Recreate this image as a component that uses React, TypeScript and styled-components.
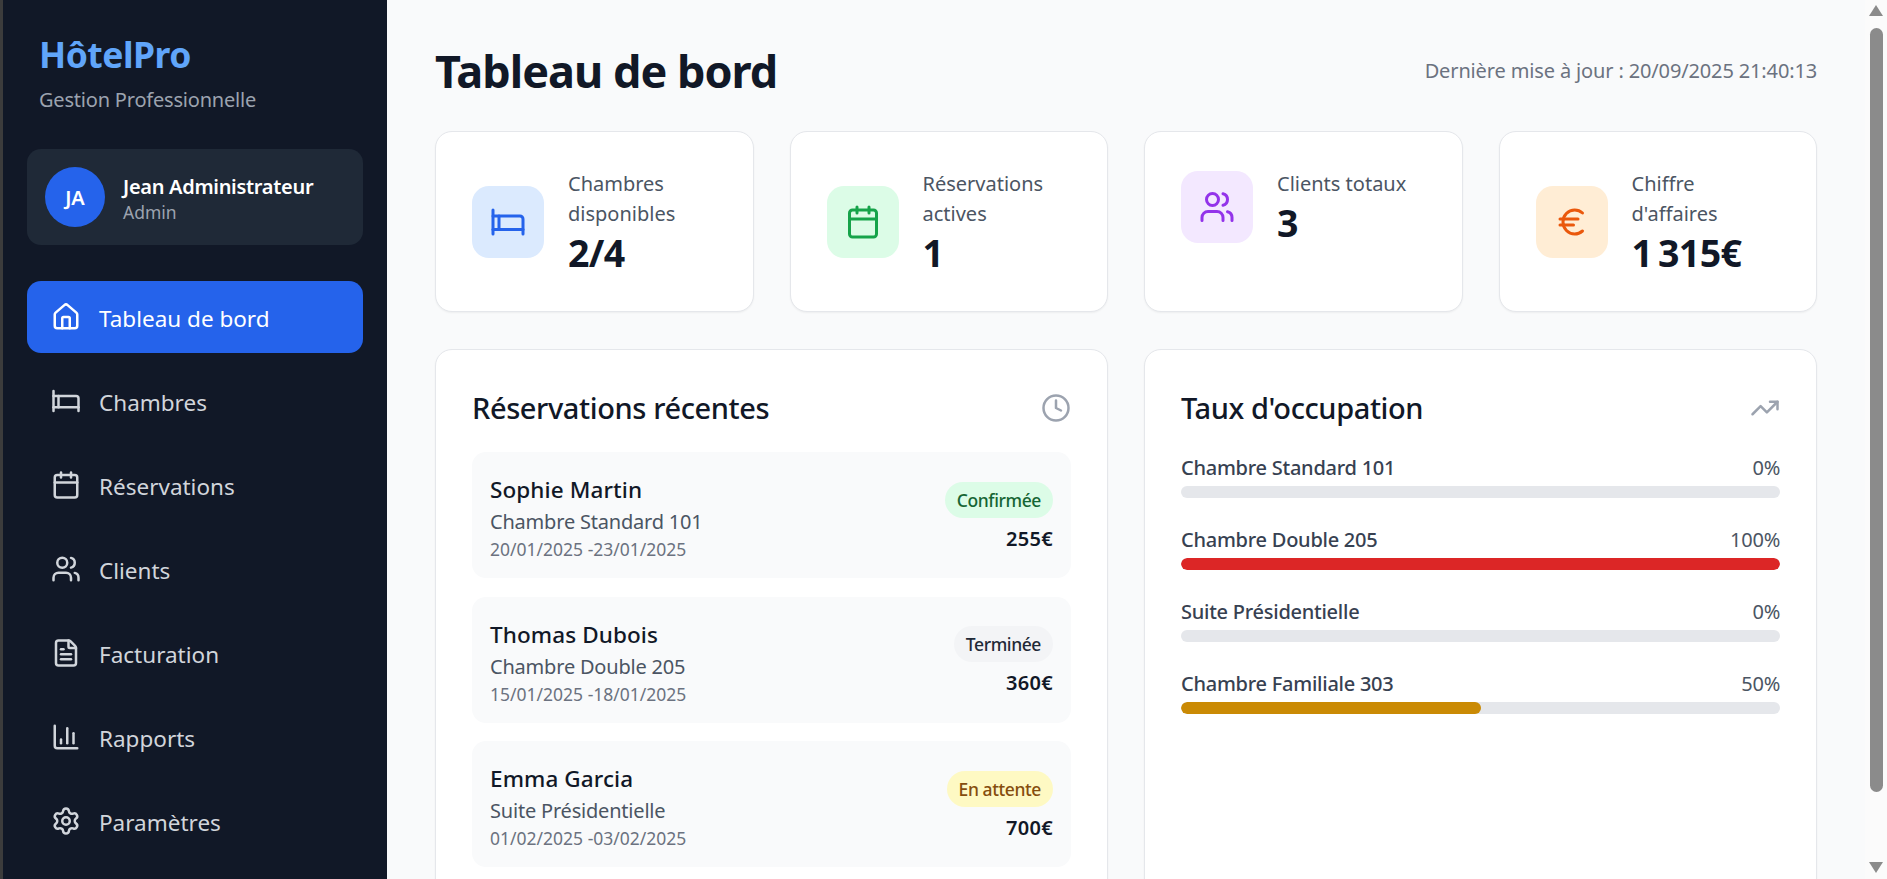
import styled, { createGlobalStyle } from 'styled-components';
import { Bed, Calendar, ChartColumn, Clock, Euro, FileText, House, Settings, TrendingUp, Users } from 'lucide-react';
import type { LucideIcon } from 'lucide-react';

interface NavEntry {
    label: string;
    icon: LucideIcon;
    active?: boolean;
}

interface StatEntry {
    label: string;
    value: string;
    icon: LucideIcon;
    tint: string;
    color: string;
}

type BookingStatus = 'confirmed' | 'done' | 'pending';

interface BookingEntry {
    guest: string;
    room: string;
    dates: string;
    status: BookingStatus;
    statusLabel: string;
    price: string;
}

interface OccupancyEntry {
    room: string;
    rate: number;
    color: string;
}

const navEntries: NavEntry[] = [
    { label: 'Tableau de bord', icon: House, active: true },
    { label: 'Chambres', icon: Bed },
    { label: 'Réservations', icon: Calendar },
    { label: 'Clients', icon: Users },
    { label: 'Facturation', icon: FileText },
    { label: 'Rapports', icon: ChartColumn },
    { label: 'Paramètres', icon: Settings },
];

const statEntries: StatEntry[] = [
    { label: 'Chambres disponibles', value: '2/4', icon: Bed, tint: '#dbeafe', color: '#2563eb' },
    { label: 'Réservations actives', value: '1', icon: Calendar, tint: '#dcfce7', color: '#16a34a' },
    { label: 'Clients totaux', value: '3', icon: Users, tint: '#f3e8ff', color: '#9333ea' },
    { label: "Chiffre d'affaires", value: '1\u2009315€', icon: Euro, tint: '#ffedd5', color: '#ea580c' },
];

const bookingEntries: BookingEntry[] = [
    { guest: 'Sophie Martin', room: 'Chambre Standard 101', dates: '20/01/2025 -23/01/2025', status: 'confirmed', statusLabel: 'Confirmée', price: '255€' },
    { guest: 'Thomas Dubois', room: 'Chambre Double 205', dates: '15/01/2025 -18/01/2025', status: 'done', statusLabel: 'Terminée', price: '360€' },
    { guest: 'Emma Garcia', room: 'Suite Présidentielle', dates: '01/02/2025 -03/02/2025', status: 'pending', statusLabel: 'En attente', price: '700€' },
];

const occupancyEntries: OccupancyEntry[] = [
    { room: 'Chambre Standard 101', rate: 0, color: '#16a34a' },
    { room: 'Chambre Double 205', rate: 100, color: '#dc2626' },
    { room: 'Suite Présidentielle', rate: 0, color: '#16a34a' },
    { room: 'Chambre Familiale 303', rate: 50, color: '#ca8a04' },
];

const badgeColors: Record<BookingStatus, { bg: string; fg: string }> = {
    confirmed: { bg: '#dcfce7', fg: '#166534' },
    done: { bg: '#f3f4f6', fg: '#1f2937' },
    pending: { bg: '#fef9c3', fg: '#854d0e' },
};

const App = () => {
    return (<>
        <GlobalStyle />
        <Page>
            <WindowEdge />
            <Sidebar>
                <Brand>HôtelPro</Brand>
                <BrandTagline>Gestion Professionnelle</BrandTagline>
                <UserCard>
                    <Avatar>JA</Avatar>
                    <UserText>
                        <UserName>Jean Administrateur</UserName>
                        <UserRole>Admin</UserRole>
                    </UserText>
                </UserCard>
                <Nav>
                    {navEntries.map(({ label, icon: Icon, active }) => (
                        <NavItem key={label} $active={active}>
                            <Icon size={30} />
                            <NavLabel>{label}</NavLabel>
                        </NavItem>
                    ))}
                </Nav>
            </Sidebar>
            <Main>
                <Header>
                    <Title>Tableau de bord</Title>
                    <Updated>Dernière mise à jour : 20/09/2025 21:40:13</Updated>
                </Header>
                <StatsGrid>
                    {statEntries.map(({ label, value, icon: Icon, tint, color }) => (
                        <StatCard key={label}>
                            <StatRow>
                                <StatIcon $tint={tint} $color={color}>
                                    <Icon size={36} />
                                </StatIcon>
                                <div>
                                    <StatLabel>{label}</StatLabel>
                                    <StatValue>{value}</StatValue>
                                </div>
                            </StatRow>
                        </StatCard>
                    ))}
                </StatsGrid>
                <PanelsGrid>
                    <Panel>
                        <PanelHeader>
                            <PanelTitle>Réservations récentes</PanelTitle>
                            <Clock size={30} />
                        </PanelHeader>
                        <BookingList>
                            {bookingEntries.map((booking) => (
                                <BookingRow key={booking.guest}>
                                    <BookingText>
                                        <GuestName>{booking.guest}</GuestName>
                                        <RoomName>{booking.room}</RoomName>
                                        <BookingDates>{booking.dates}</BookingDates>
                                    </BookingText>
                                    <BookingSide>
                                        <StatusBadge $status={booking.status}>{booking.statusLabel}</StatusBadge>
                                        <Price>{booking.price}</Price>
                                    </BookingSide>
                                </BookingRow>
                            ))}
                        </BookingList>
                    </Panel>
                    <Panel>
                        <PanelHeader>
                            <PanelTitle>Taux d'occupation</PanelTitle>
                            <TrendingUp size={30} />
                        </PanelHeader>
                        <OccupancyList>
                            {occupancyEntries.map(({ room, rate, color }) => (
                                <div key={room}>
                                    <OccupancyHead>
                                        <OccupancyRoom>{room}</OccupancyRoom>
                                        <OccupancyRate>{rate}%</OccupancyRate>
                                    </OccupancyHead>
                                    <BarTrack>
                                        <BarFill $color={color} style={{ width: `${rate}%` }} />
                                    </BarTrack>
                                </div>
                            ))}
                        </OccupancyList>
                    </Panel>
                </PanelsGrid>
            </Main>
            <ScrollTrack>
                <ArrowUp />
                <ScrollThumb />
                <ArrowDown />
            </ScrollTrack>
        </Page>
    </>);
};

const GlobalStyle = createGlobalStyle`
  html, body {
    margin: 0;
    height: 100%;
    overflow: hidden;
  }
  body {
    font-family: "Noto Sans", "Open Sans", Arial, sans-serif;
    color: #111827;
  }
  * {
    box-sizing: border-box;
  }
`;

const Page = styled.div`
  display: flex;
  height: 100vh;
  overflow: hidden;
  background: #f9fafb;
`;

const WindowEdge = styled.div`
  width: 3px;
  flex-shrink: 0;
  background: #3c3c3c;
`;

const Sidebar = styled.aside`
  width: 384px;
  flex-shrink: 0;
  padding: 33px 24px 0;
  background: #111827;
`;

const Brand = styled.div`
  margin-left: 12px;
  font-size: 35.5px;
  line-height: 42px;
  font-weight: 700;
  letter-spacing: -0.5px;
  color: #60a5fa;
`;

const BrandTagline = styled.div`
  margin: 10px 0 34px 12px;
  font-size: 20px;
  line-height: 30px;
  letter-spacing: -0.2px;
  color: #9ca3af;
`;

const UserCard = styled.div`
  display: flex;
  align-items: center;
  gap: 18px;
  height: 96px;
  padding: 0 18px;
  margin-bottom: 36px;
  border-radius: 14px;
  background: #1f2937;
`;

const Avatar = styled.div`
  display: flex;
  align-items: center;
  justify-content: center;
  width: 60px;
  height: 60px;
  border-radius: 50%;
  background: #2563eb;
  color: #fff;
  font-size: 20px;
  font-weight: 600;
`;

const UserText = styled.div`
  padding-top: 2px;
`;

const UserName = styled.div`
  font-size: 20px;
  line-height: 28px;
  font-weight: 600;
  letter-spacing: -0.3px;
  color: #fff;
`;

const UserRole = styled.div`
  font-size: 17.5px;
  line-height: 22px;
  color: #9ca3af;
`;

const Nav = styled.nav`
  display: flex;
  flex-direction: column;
  gap: 12px;
`;

const NavItem = styled.div<{ $active?: boolean }>`
  display: flex;
  align-items: center;
  gap: 18px;
  height: 72px;
  padding: 0 24px;
  border-radius: 14px;
  background: ${({ $active }) => ($active ? '#2563eb' : 'transparent')};
  color: ${({ $active }) => ($active ? '#fff' : '#d1d5db')};
`;

const NavLabel = styled.span`
  padding-top: 3px;
  font-size: 22.5px;
`;

const Main = styled.main`
  flex: 1;
  min-width: 0;
  padding: 36px 48px 0;
  overflow: hidden;
`;

const Header = styled.header`
  display: flex;
  align-items: center;
  justify-content: space-between;
  height: 72px;
  margin-bottom: 23px;
`;

const Title = styled.h1`
  margin: 0;
  padding-bottom: 2px;
  font-size: 45px;
  line-height: 52px;
  font-weight: 700;
  letter-spacing: -1px;
  color: #111827;
`;

const Updated = styled.div`
  padding-bottom: 4px;
  font-size: 20px;
  letter-spacing: -0.14px;
  color: #6b7280;
`;

const StatsGrid = styled.section`
  display: grid;
  grid-template-columns: repeat(4, 1fr);
  gap: 36px;
  margin-bottom: 37px;
`;

const StatCard = styled.div`
  height: 181px;
  padding: 37px 36px 0;
  border: 1px solid #e5e7eb;
  border-radius: 17px;
  background: #fff;
  box-shadow: 0 1px 2px rgba(0, 0, 0, 0.05);
`;

const StatRow = styled.div`
  display: flex;
  align-items: center;
  gap: 24px;
`;

const StatIcon = styled.div<{ $tint: string; $color: string }>`
  display: flex;
  align-items: center;
  justify-content: center;
  flex-shrink: 0;
  width: 72px;
  height: 72px;
  border-radius: 17px;
  background: ${({ $tint }) => $tint};
  color: ${({ $color }) => $color};
`;

const StatLabel = styled.div`
  font-size: 20px;
  line-height: 30px;
  color: #4b5563;
`;

const StatValue = styled.div`
  margin-top: 2px;
  font-size: 37.5px;
  line-height: 44px;
  font-weight: 700;
  letter-spacing: -0.6px;
  color: #111827;
`;

const PanelsGrid = styled.section`
  display: grid;
  grid-template-columns: repeat(2, 1fr);
  gap: 36px;
`;

const Panel = styled.div`
  min-height: 640px;
  padding: 36px;
  border: 1px solid #e5e7eb;
  border-radius: 17px;
  background: #fff;
  box-shadow: 0 1px 2px rgba(0, 0, 0, 0.05);
`;

const PanelHeader = styled.div`
  display: flex;
  align-items: center;
  justify-content: space-between;
  height: 44px;
  margin-bottom: 22px;
  color: #9ca3af;
`;

const PanelTitle = styled.h2`
  margin: 0;
  font-size: 29px;
  line-height: 44px;
  font-weight: 500;
  letter-spacing: -0.4px;
  color: #111827;
`;

const BookingList = styled.div`
  display: flex;
  flex-direction: column;
  gap: 18.5px;
`;

const BookingRow = styled.div`
  display: flex;
  align-items: center;
  justify-content: space-between;
  height: 126px;
  padding: 0 18px;
  border-radius: 14px;
  background: #f9fafb;
`;

const BookingText = styled.div`
  padding-top: 3px;
`;

const GuestName = styled.div`
  font-size: 22.5px;
  line-height: 35px;
  font-weight: 500;
  letter-spacing: 0.1px;
  color: #111827;
`;

const RoomName = styled.div`
  font-size: 20px;
  line-height: 30px;
  letter-spacing: -0.2px;
  color: #4b5563;
`;

const BookingDates = styled.div`
  font-size: 17.5px;
  line-height: 24px;
  color: #6b7280;
`;

const BookingSide = styled.div`
  display: flex;
  flex-direction: column;
  align-items: flex-end;
  gap: 7px;
  padding-top: 4px;
`;

const StatusBadge = styled.span<{ $status: BookingStatus }>`
  display: flex;
  align-items: center;
  height: 36px;
  padding: 0 12px;
  border-radius: 18px;
  font-size: 17.5px;
  font-weight: 500;
  letter-spacing: -0.4px;
  background: ${({ $status }) => badgeColors[$status].bg};
  color: ${({ $status }) => badgeColors[$status].fg};
`;

const Price = styled.div`
  font-size: 20px;
  line-height: 28px;
  font-weight: 600;
  letter-spacing: 0.3px;
  color: #111827;
`;

const OccupancyList = styled.div`
  display: flex;
  flex-direction: column;
  gap: 26px;
  margin-top: 2px;
`;

const OccupancyHead = styled.div`
  display: flex;
  justify-content: space-between;
  height: 30px;
  margin-bottom: 4px;
  font-size: 20px;
  line-height: 32px;
  letter-spacing: -0.25px;
`;

const OccupancyRoom = styled.span`
  font-weight: 500;
  color: #374151;
`;

const OccupancyRate = styled.span`
  color: #4b5563;
`;

const BarTrack = styled.div`
  height: 12px;
  border-radius: 6px;
  overflow: hidden;
  background: #e5e7eb;
`;

const BarFill = styled.div<{ $color: string }>`
  height: 100%;
  border-radius: 6px;
  background: ${({ $color }) => $color};
`;

const ScrollTrack = styled.div`
  display: flex;
  flex-direction: column;
  align-items: center;
  width: 22px;
  flex-shrink: 0;
  padding: 5px 0 6px;
  background: #fbfbfb;
`;

const ArrowUp = styled.div`
  flex-shrink: 0;
  width: 0;
  height: 0;
  border-left: 7px solid transparent;
  border-right: 7px solid transparent;
  border-bottom: 11px solid #8b8b8b;
`;

const ScrollThumb = styled.div`
  flex-shrink: 0;
  width: 13px;
  height: 764px;
  margin-top: 12px;
  border-radius: 7px;
  background: #8b8b8b;
`;

const ArrowDown = styled.div`
  flex-shrink: 0;
  width: 0;
  height: 0;
  margin-top: auto;
  border-left: 7px solid transparent;
  border-right: 7px solid transparent;
  border-top: 11px solid #8b8b8b;
`;

export default App
